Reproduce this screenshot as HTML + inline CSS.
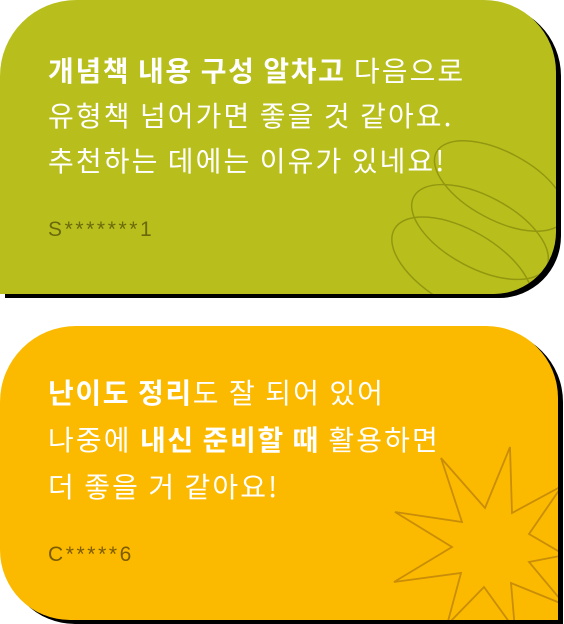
<!DOCTYPE html>
<html><head><meta charset="utf-8"><style>
html,body{margin:0;padding:0;background:#fff;width:564px;height:624px;overflow:hidden}
.card{position:absolute;box-sizing:border-box;overflow:hidden;font-family:"Liberation Sans","Noto Sans CJK KR",sans-serif}
.c1{left:0;top:0;width:556px;height:294px;background:#b8bf1c;border-radius:76px 72px 62px 0;box-shadow:5px 4px 0 #000}
.c2{left:0;top:326px;width:558px;height:294px;background:#fbba00;border-radius:76px 72px 0 70px;box-shadow:5px 4px 0 #000}
.t{position:absolute;left:48px;top:48px;color:#fff;font-size:28px;line-height:45px;letter-spacing:2.1px;white-space:nowrap;font-family:"Noto Sans CJK KR",sans-serif;font-weight:400}
.t b{font-weight:700;letter-spacing:1.6px}
.a{position:absolute;left:48px;font-size:21px;letter-spacing:2.6px;font-family:"Liberation Sans",sans-serif}
svg{position:absolute;left:0;top:0}
</style></head><body>
<div class="card c1">
<svg width="556" height="294"><g fill="none" stroke="#8e930f" stroke-width="1.5" opacity="0.9">
<ellipse cx="500" cy="186" rx="72" ry="34" transform="rotate(28 500 186)"/>
<ellipse cx="480" cy="232" rx="75" ry="36" transform="rotate(28 480 232)"/>
<ellipse cx="462" cy="268" rx="78" ry="38" transform="rotate(30 462 268)"/>
</g></svg>
<div class="t"><b>개념책 내용 구성 알차고</b> 다음으로<br>유형책 넘어가면 좋을 것 같아요.<br>추천하는 데에는 이유가 있네요!</div>
<div class="a" style="top:218px;color:#6a6a0c">S*******1</div>
</div>
<div class="card c2">
<svg width="558" height="294"><polygon fill="none" stroke="#c98d08" stroke-width="1.8" points="510,121 512,187 562,160 529,208 565,229 529,236 565,279 511,257 515,304 484,261 447,299 461,247 394,256 452,221 395,186 462,196 441,132 485,182"/></svg>
<div class="t" style="top:43px;line-height:47px"><b>난이도 정리</b>도 잘 되어 있어<br>나중에 <b>내신 준비할 때</b> 활용하면<br>더 좋을 거 같아요!</div>
<div class="a" style="top:217px;color:#7d5c00">C*****6</div>
</div>
</body></html>
